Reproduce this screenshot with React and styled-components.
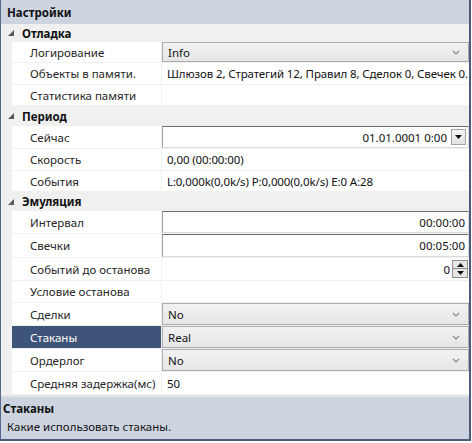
import React from "react";
import styled, { createGlobalStyle, css } from "styled-components";

const GlobalStyle = createGlobalStyle`
  html, body { margin: 0; padding: 0; background: #ffffff; }
  body { font-family: "Segoe UI", "Noto Sans", "Open Sans", sans-serif; font-size: 11.5px; color: #1b1b1b; }
`;

const Frame = styled.div`
  width: 471px;
  height: 441px;
  box-sizing: border-box;
  border-left: 1px solid #55678a;
  border-right: 2px solid #4a5b7c;
  border-bottom: 2px solid #4a5b7c;
  display: flex;
  flex-direction: column;
  overflow: hidden;
  background: #ffffff;
`;

const TitleBar = styled.div`
  height: 24px;
  flex: none;
  background: #cdd3df;
  display: flex;
  align-items: center;
  padding-left: 6px;
  font-weight: 700;
  color: #111;
`;

const Grid = styled.div`
  flex: 1;
  display: flex;
  flex-direction: column;
  background: #ffffff;
`;

const Category = styled.div`
  height: ${(p) => p.h}px;
  flex: none;
  display: flex;
  align-items: center;
  background: #f0f0f0;
  font-weight: 700;
  color: #111;
`;

const Toggle = styled.span`
  width: 21px;
  display: flex;
  align-items: center;
  padding-left: 7px;
  box-sizing: border-box;
`;

const Row = styled.div`
  height: ${(p) => p.h}px;
  flex: none;
  display: grid;
  grid-template-columns: 11px 149px 1fr;
  box-sizing: border-box;
  border-bottom: 1px solid #f0f0f0;
`;

const Gutter = styled.div`
  background: #f0f0f0;
`;

const Name = styled.div`
  display: flex;
  align-items: center;
  padding-left: 18px;
  white-space: nowrap;
  overflow: hidden;
  color: #262626;
  ${(p) =>
    p.selected
      ? css`
          background: #3f5479;
          color: #ffffff;
        `
      : css`
          background: #ffffff;
        `}
`;

const Value = styled.div`
  display: flex;
  align-items: stretch;
  border-left: 1px solid #f0f0f0;
  min-width: 0;
  overflow: hidden;
  white-space: nowrap;
`;

const PlainText = styled.span`
  display: flex;
  align-items: center;
  padding-left: 5px;
  letter-spacing: -0.12px;
  color: #111;
`;

const Combo = styled.div`
  flex: 1;
  display: flex;
  align-items: center;
  justify-content: space-between;
  box-sizing: border-box;
  border: 1px solid #acacac;
  background: linear-gradient(#f2f2f2, #e6e6e6);
  padding: 0 8px 0 5px;
  color: #111;
`;

const TextBox = styled.div`
  flex: 1;
  display: flex;
  align-items: center;
  justify-content: flex-end;
  gap: 4px;
  box-sizing: border-box;
  border: 1px solid;
  border-color: #6f6f6f #dadada #dadada #a3a3a3;
  background: #ffffff;
  padding: 0 ${(p) => (p.withButton ? 2 : 3)}px 0 5px;
  color: #111;
`;

const DropButton = styled.div`
  width: 15px;
  height: 16px;
  box-sizing: border-box;
  border: 1px solid #a3a3a3;
  background: linear-gradient(#f5f5f5, #e2e2e2);
  display: flex;
  align-items: center;
  justify-content: center;
`;

const SpinWrap = styled.div`
  flex: 1;
  display: flex;
  align-items: center;
  justify-content: flex-end;
  gap: 2px;
  padding-right: 1px;
  color: #111;
`;

const SpinCol = styled.div`
  display: flex;
  flex-direction: column;
`;

const SpinBtn = styled.div`
  width: 16px;
  height: 9px;
  box-sizing: border-box;
  border: 1px solid #8f8f8f;
  background: #e6e6e6;
  display: flex;
  align-items: center;
  justify-content: center;
  & + & {
    border-top: none;
    height: 9px;
  }
`;

const Splitter = styled.div`
  height: 2px;
  flex: none;
  background: #e4e4e4;
`;

const HelpPanel = styled.div`
  height: 42px;
  flex: none;
  background: #cdd3df;
  display: flex;
  flex-direction: column;
  padding-top: 3px;
  box-sizing: border-box;
`;

const HelpTitle = styled.div`
  font-weight: 700;
  padding-left: 2px;
  line-height: 18px;
  color: #111;
`;

const HelpText = styled.div`
  padding-left: 6px;
  line-height: 18px;
  color: #111;
`;

const Expander = () => (
  <svg width="6" height="6" viewBox="0 0 6 6">
    <polygon points="6,0 6,6 0,6" fill="#5a5a5a" />
  </svg>
);

const Chevron = () => (
  <svg width="8" height="5" viewBox="0 0 8 5">
    <polyline points="1,1 4,4 7,1" fill="none" stroke="#8a8a8a" strokeWidth="1.2" />
  </svg>
);

const ArrowDown = ({ w = 7, h = 4 }) => (
  <svg width={w} height={h} viewBox="0 0 7 4">
    <polygon points="0,0 7,0 3.5,4" fill="#111" />
  </svg>
);

const ArrowUp = () => (
  <svg width="7" height="4" viewBox="0 0 7 4">
    <polygon points="0,4 7,4 3.5,0" fill="#111" />
  </svg>
);

const Prop = ({ name, h, selected, children }) => (
  <Row h={h}>
    <Gutter />
    <Name selected={selected}>{name}</Name>
    <Value>{children}</Value>
  </Row>
);

const Cat = ({ title, h }) => (
  <Category h={h}>
    <Toggle>
      <Expander />
    </Toggle>
    {title}
  </Category>
);

const ComboValue = ({ text }) => (
  <Combo>
    <span>{text}</span>
    <Chevron />
  </Combo>
);

export default function App() {
  return (
    <>
      <GlobalStyle />
      <Frame>
        <TitleBar>Настройки</TitleBar>
        <Grid>
          <Cat title="Отладка" h={18} />
          <Prop name="Логирование" h={21}>
            <ComboValue text="Info" />
          </Prop>
          <Prop name="Объекты в памяти." h={22}>
            <PlainText>Шлюзов 2, Стратегий 12, Правил 8, Сделок 0, Свечек 0.</PlainText>
          </Prop>
          <Prop name="Статистика памяти" h={21} />
          <Cat title="Период" h={20} />
          <Prop name="Сейчас" h={23}>
            <TextBox withButton>
              <span>01.01.0001 0:00</span>
              <DropButton>
                <ArrowDown />
              </DropButton>
            </TextBox>
          </Prop>
          <Prop name="Скорость" h={22}>
            <PlainText>0,00 (00:00:00)</PlainText>
          </Prop>
          <Prop name="События" h={21}>
            <PlainText>L:0,000k(0,0k/s) P:0,000(0,0k/s) E:0 A:28</PlainText>
          </Prop>
          <Cat title="Эмуляция" h={19} />
          <Prop name="Интервал" h={23}>
            <TextBox>00:00:00</TextBox>
          </Prop>
          <Prop name="Свечки" h={24}>
            <TextBox>00:05:00</TextBox>
          </Prop>
          <Prop name="Событий до останова" h={23}>
            <SpinWrap>
              <span>0</span>
              <SpinCol>
                <SpinBtn>
                  <ArrowUp />
                </SpinBtn>
                <SpinBtn>
                  <ArrowDown />
                </SpinBtn>
              </SpinCol>
            </SpinWrap>
          </Prop>
          <Prop name="Условие останова" h={22} />
          <Prop name="Сделки" h={23}>
            <ComboValue text="No" />
          </Prop>
          <Prop name="Стаканы" h={23} selected>
            <ComboValue text="Real" />
          </Prop>
          <Prop name="Ордерлог" h={23}>
            <ComboValue text="No" />
          </Prop>
          <Prop name="Средняя задержка(мс)" h={23}>
            <PlainText>50</PlainText>
          </Prop>
        </Grid>
        <Splitter />
        <HelpPanel>
          <HelpTitle>Стаканы</HelpTitle>
          <HelpText>Какие использовать стаканы.</HelpText>
        </HelpPanel>
      </Frame>
    </>
  );
}
